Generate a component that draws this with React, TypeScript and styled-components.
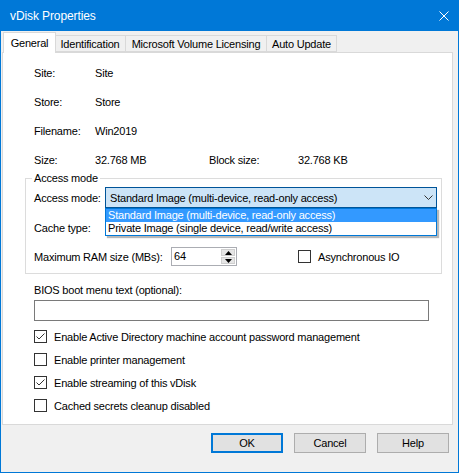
import React from 'react';
import styled, { createGlobalStyle } from 'styled-components';

const GlobalStyle = createGlobalStyle`
  html, body {
    margin: 0;
    padding: 0;
    background: #ffffff;
  }
  body {
    font-family: "Liberation Sans", Arial, sans-serif;
    font-size: 11px;
    letter-spacing: -0.2px;
    color: #000000;
  }
  * { box-sizing: border-box; }
`;

// Window frame
const Window = styled.div`
  width: 459px;
  height: 473px;
  border: 1px solid #0078d7;
  border-top: none;
  display: flex;
  flex-direction: column;
  background: #f0f0f0;
`;

const TitleBar = styled.div`
  height: 31px;
  flex: none;
  background: #0078d7;
  color: #ffffff;
  display: flex;
  align-items: center;
  padding: 0 9px 0 9px;
  font-size: 12px;
  letter-spacing: -0.1px;
`;

const CloseIcon = styled.svg`
  margin-left: auto;
  width: 10px;
  height: 10px;
`;

const Body = styled.div`
  flex: 1;
  display: flex;
  flex-direction: column;
  padding: 1px 5px 0 1px;
`;

// Tabs
const TabStrip = styled.div`
  height: 20px;
  flex: none;
  display: flex;
  align-items: flex-end;
  padding-left: 3px;
`;

const Tab = styled.div<{ $active?: boolean; $w: number }>`
  position: relative;
  width: ${p => p.$w}px;
  height: ${p => (p.$active ? 21 : 17)}px;
  margin: ${p => (p.$active ? '0 -2px -1px -2px' : '0 -1px 0 0')};
  z-index: ${p => (p.$active ? 1 : 0)};
  background: ${p => (p.$active ? '#ffffff' : '#f0f0f0')};
  border: 1px solid #d9d9d9;
  border-bottom: ${p => (p.$active ? 'none' : '1px solid #d9d9d9')};
  display: flex;
  align-items: center;
  justify-content: center;
  white-space: nowrap;
  padding-top: ${p => (p.$active ? 0 : 1)}px;
`;

const Panel = styled.div`
  flex: 1;
  background: #ffffff;
  border: 1px solid #d9d9d9;
  padding: 13px 0 0 22px;
`;

// Info rows at the top
const InfoList = styled.div`
  display: flex;
  flex-direction: column;
  gap: 14px;
  padding-left: 9px;
`;

const InfoRow = styled.div`
  display: grid;
  grid-template-columns: 61px 114px 89px auto;
  line-height: 15px;
  height: 15px;
`;

// Group box
const GroupBox = styled.fieldset`
  width: 417px;
  margin: 3px 0 0 0;
  padding: 1px 4px 7px 8px;
  border: 1px solid #dcdcdc;
  min-width: 0;
`;

const Legend = styled.legend`
  padding: 0 2px;
  margin-left: -2px;
  line-height: 15px;
`;

const FieldRow = styled.div<{ $h: number }>`
  display: flex;
  align-items: center;
  height: ${p => p.$h}px;
  & + & {
    margin-top: 9px;
  }
`;

const FieldLabel = styled.span<{ $w: number }>`
  width: ${p => p.$w}px;
  flex: none;
  white-space: nowrap;
`;

const ComboWrap = styled.div`
  position: relative;
  flex: 1;
  height: 21px;
`;

const Combo = styled.div`
  height: 21px;
  display: flex;
  align-items: center;
  padding-left: 4px;
  border: 1px solid #005499;
  background: #cce4f7;
  white-space: nowrap;
`;

const Chevron = styled.svg`
  margin-left: auto;
  margin-right: 3px;
  width: 9px;
  height: 5px;
`;

const DropList = styled.div`
  position: absolute;
  top: 100%;
  left: 0;
  right: 0;
  z-index: 5;
  background: #ffffff;
  border: 1px solid #0078d7;
  box-shadow: 2px 2px 1px rgba(0, 0, 0, 0.28);
`;

const DropItem = styled.div<{ $selected?: boolean }>`
  height: 13px;
  line-height: 13px;
  padding-left: 2px;
  white-space: nowrap;
  background: ${p => (p.$selected ? '#3399ff' : '#ffffff')};
  color: ${p => (p.$selected ? '#ffffff' : '#000000')};
`;

const Spinner = styled.div`
  width: 66px;
  height: 19px;
  border: 1px solid #abadb3;
  display: flex;
  background: #ffffff;
`;

const SpinValue = styled.span`
  flex: 1;
  padding-left: 2px;
  line-height: 17px;
`;

const SpinButtons = styled.div`
  width: 15px;
  display: flex;
  flex-direction: column;
  gap: 1px;
  padding: 1px 1px 1px 0;
`;

const SpinButton = styled.div`
  flex: 1;
  background: #e5e5e5;
  border: 1px solid #cfcfcf;
  display: flex;
  align-items: center;
  justify-content: center;
`;

const Arrow = styled.svg`
  width: 7px;
  height: 4px;
`;

// Checkbox
const CheckRow = styled.label<{ $ml?: number }>`
  display: flex;
  align-items: center;
  gap: 7px;
  margin-left: ${p => p.$ml ?? 0}px;
  white-space: nowrap;
`;

const Box = styled.span`
  width: 13px;
  height: 13px;
  flex: none;
  border: 1px solid #333333;
  background: #ffffff;
  display: flex;
`;

const Lower = styled.div`
  padding-left: 9px;
  margin-top: 9px;
`;

const TextLabel = styled.div`
  line-height: 15px;
`;

const TextInput = styled.div`
  width: 395px;
  height: 21px;
  margin-top: 2px;
  border: 1px solid #7a7a7a;
  background: #ffffff;
`;

const CheckList = styled.div`
  margin-top: 4px;
  display: flex;
  flex-direction: column;
`;

const CheckLine = styled.div`
  height: 23px;
  display: flex;
  align-items: center;
`;

// Footer buttons
const Footer = styled.div`
  height: 47px;
  flex: none;
  display: flex;
  justify-content: flex-end;
  align-items: flex-start;
  gap: 11px;
  padding: 8px 4px 0 0;
`;

const Button = styled.button<{ $default?: boolean }>`
  width: 72px;
  height: 20px;
  padding: 0;
  font: inherit;
  letter-spacing: inherit;
  color: #000000;
  background: #e1e1e1;
  border: ${p => (p.$default ? '2px solid #0078d7' : '1px solid #adadad')};
`;

const Checkbox: React.FC<{ checked?: boolean; label: string; ml?: number }> = ({ checked, label, ml }) => (
  <CheckRow $ml={ml}>
    <Box>
      {checked && (
        <svg width="11" height="11" viewBox="0 0 11 11">
          <path d="M1.5 5.5 L4 8 L9.5 2.5" fill="none" stroke="#333333" strokeWidth="1" />
        </svg>
      )}
    </Box>
    <span>{label}</span>
  </CheckRow>
);

const tabs = [
  { label: 'General', w: 53, active: true },
  { label: 'Identification', w: 72 },
  { label: 'Microsoft Volume Licensing', w: 142 },
  { label: 'Auto Update', w: 71 },
];

const info = [
  ['Site:', 'Site'],
  ['Store:', 'Store'],
  ['Filename:', 'Win2019'],
  ['Size:', '32.768 MB', 'Block size:', '32.768 KB'],
];

const checks = [
  { label: 'Enable Active Directory machine account password management', checked: true },
  { label: 'Enable printer management', checked: false },
  { label: 'Enable streaming of this vDisk', checked: true },
  { label: 'Cached secrets cleanup disabled', checked: false },
];

const App: React.FC = () => {
  return (
    <>
      <GlobalStyle />
      <Window>
        <TitleBar>
          <span>vDisk Properties</span>
          <CloseIcon viewBox="0 0 10 10">
            <path d="M0.5 0.5 L9.5 9.5 M9.5 0.5 L0.5 9.5" stroke="#ffffff" strokeWidth="1" />
          </CloseIcon>
        </TitleBar>
        <Body>
          <TabStrip>
            {tabs.map(t => (
              <Tab key={t.label} $w={t.w} $active={t.active}>
                {t.label}
              </Tab>
            ))}
          </TabStrip>
          <Panel>
            <InfoList>
              {info.map(row => (
                <InfoRow key={row[0]}>
                  {row.map((cell, i) => (
                    <span key={i}>{cell}</span>
                  ))}
                </InfoRow>
              ))}
            </InfoList>

            <GroupBox>
              <Legend>Access mode</Legend>
              <FieldRow $h={21}>
                <FieldLabel $w={71}>Access mode:</FieldLabel>
                <ComboWrap>
                  <Combo>
                    <span>Standard Image (multi-device, read-only access)</span>
                    <Chevron viewBox="0 0 9 5">
                      <polyline points="0.5,0.5 4.5,4.5 8.5,0.5" fill="none" stroke="#333333" strokeWidth="1" />
                    </Chevron>
                  </Combo>
                  <DropList>
                    <DropItem $selected>Standard Image (multi-device, read-only access)</DropItem>
                    <DropItem>Private Image (single device, read/write access)</DropItem>
                  </DropList>
                </ComboWrap>
              </FieldRow>
              <FieldRow $h={21}>
                <FieldLabel $w={71}>Cache type:</FieldLabel>
              </FieldRow>
              <FieldRow $h={19}>
                <FieldLabel $w={137}>Maximum RAM size (MBs):</FieldLabel>
                <Spinner>
                  <SpinValue>64</SpinValue>
                  <SpinButtons>
                    <SpinButton>
                      <Arrow viewBox="0 0 7 4">
                        <polygon points="3.5,0 7,4 0,4" fill="#000000" />
                      </Arrow>
                    </SpinButton>
                    <SpinButton>
                      <Arrow viewBox="0 0 7 4">
                        <polygon points="0,0 7,0 3.5,4" fill="#000000" />
                      </Arrow>
                    </SpinButton>
                  </SpinButtons>
                </Spinner>
                <Checkbox label="Asynchronous IO" ml={61} />
              </FieldRow>
            </GroupBox>

            <Lower>
              <TextLabel>BIOS boot menu text (optional):</TextLabel>
              <TextInput />
              <CheckList>
                {checks.map(c => (
                  <CheckLine key={c.label}>
                    <Checkbox label={c.label} checked={c.checked} />
                  </CheckLine>
                ))}
              </CheckList>
            </Lower>
          </Panel>
          <Footer>
            <Button $default>OK</Button>
            <Button>Cancel</Button>
            <Button>Help</Button>
          </Footer>
        </Body>
      </Window>
    </>
  );
};

export default App;
